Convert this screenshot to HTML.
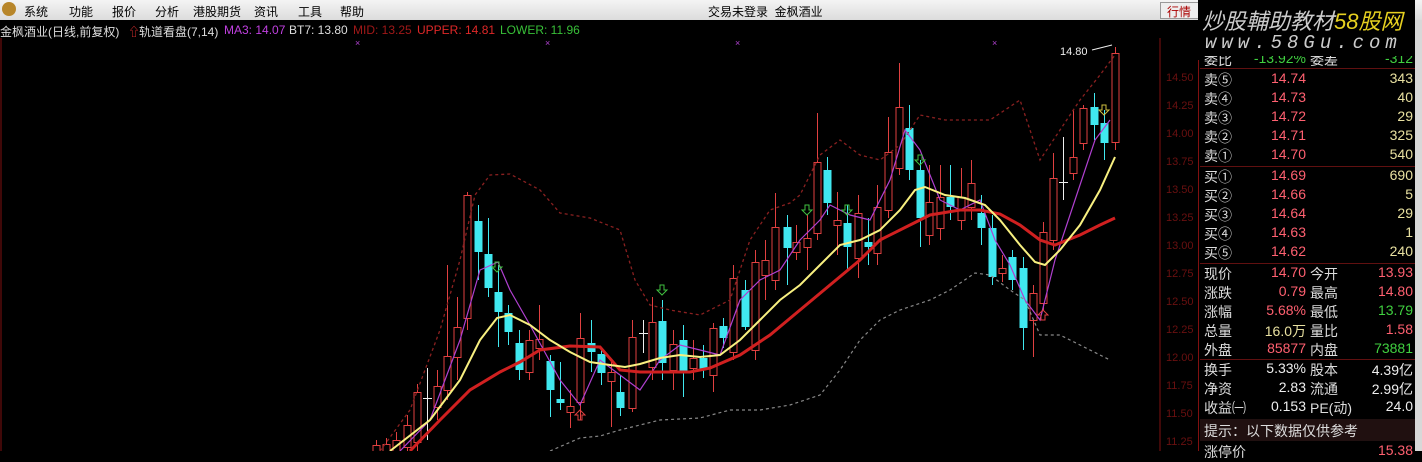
<!DOCTYPE html>
<html><head><meta charset="utf-8">
<style>
*{margin:0;padding:0;box-sizing:border-box}
body{width:1422px;height:451px;overflow:hidden;background:#000;font-family:"Liberation Sans","Noto Sans CJK SC",sans-serif;position:relative}
.menu{position:absolute;left:0;top:0;width:1422px;height:20px;background:linear-gradient(#f4f4f4,#dcdcdc);font-size:12px;color:#000}
.menu span{position:absolute;top:3px}
.info{position:absolute;left:0;top:21px;height:17px;font-size:12px;white-space:nowrap}
.info span{position:absolute;top:2px}
.rp{position:absolute;left:1200px;top:60px;width:215px;height:391px;font-size:14px}
.row{position:absolute;left:0;width:215px;height:19px}
.row b{font-weight:normal;position:absolute}
.l1{left:4px;color:#ddd}.p{right:109px;text-align:right;font-weight:bold}.l2{left:110px;color:#ddd}.v{right:2px;text-align:right;font-weight:bold}
.ax{position:absolute;left:1166px;font-size:11px;color:#6a1010}
</style></head><body>
<div class="menu">
<span style="left:2px;top:2px;width:14px;height:14px;border-radius:7px;background:#b8862a"></span>
<span style="left:24px">系统</span><span style="left:69px">功能</span><span style="left:112px">报价</span><span style="left:155px">分析</span><span style="left:193px">港股期货</span><span style="left:254px">资讯</span><span style="left:298px">工具</span><span style="left:340px">帮助</span>
<span style="left:708px">交易未登录 &nbsp;金枫酒业</span>
<span style="left:1160px;top:2px;width:40px;height:17px;border:1px solid #999;background:#eee;padding-left:6px;color:#a00">行情</span>
</div>
<div class="info">
<span style="left:0;color:#ddd">金枫酒业(日线,前复权)</span>
<span style="left:128px;color:#e33">⇧</span>
<span style="left:139px;color:#ddd">轨道看盘(7,14)</span>
<span style="left:224px;color:#c040e0">MA3: 14.07</span>
<span style="left:289px;color:#ddd">BT7: 13.80</span>
<span style="left:353px;color:#a01818">MID: 13.25</span>
<span style="left:417px;color:#e02828">UPPER: 14.81</span>
<span style="left:500px;color:#38c038">LOWER: 11.96</span>
</div>
<svg id="c" style="position:absolute;left:0;top:38px" width="1200" height="413" viewBox="0 38 1200 413"></svg>
<div class="ax" style="top:72px">14.50</div><div class="ax" style="top:100px">14.25</div><div class="ax" style="top:128px">14.00</div><div class="ax" style="top:156px">13.75</div><div class="ax" style="top:184px">13.50</div><div class="ax" style="top:212px">13.25</div><div class="ax" style="top:240px">13.00</div><div class="ax" style="top:268px">12.75</div><div class="ax" style="top:296px">12.50</div><div class="ax" style="top:324px">12.25</div><div class="ax" style="top:352px">12.00</div><div class="ax" style="top:380px">11.75</div><div class="ax" style="top:408px">11.50</div><div class="ax" style="top:436px">11.25</div>
<div style="position:absolute;left:1415px;top:20px;width:7px;height:431px;background:#d8d8d8"></div>
<div class="rp">
<div class="row" style="top:-10px"><b class="l1">委比</b><b class="p" style="color:#40d040">-13.92%</b><b class="l2">委差</b><b class="v" style="color:#40d040">-312</b></div>
<div style="position:absolute;left:0;top:8px;width:215px;height:1px;background:#601010"></div>
<div class="row" style="top:10px"><b class="l1">卖⑤</b><b class="p" style="color:#ff6070">14.74</b><b class="v" style="color:#e8e0a0">343</b></div>
<div class="row" style="top:29px"><b class="l1">卖④</b><b class="p" style="color:#ff6070">14.73</b><b class="v" style="color:#e8e0a0">40</b></div>
<div class="row" style="top:48px"><b class="l1">卖③</b><b class="p" style="color:#ff6070">14.72</b><b class="v" style="color:#e8e0a0">29</b></div>
<div class="row" style="top:67px"><b class="l1">卖②</b><b class="p" style="color:#ff6070">14.71</b><b class="v" style="color:#e8e0a0">325</b></div>
<div class="row" style="top:86px"><b class="l1">卖①</b><b class="p" style="color:#ff6070">14.70</b><b class="v" style="color:#e8e0a0">540</b></div>
<div style="position:absolute;left:0;top:106px;width:215px;height:1px;background:#601010"></div>
<div class="row" style="top:107px"><b class="l1">买①</b><b class="p" style="color:#ff6070">14.69</b><b class="v" style="color:#e8e0a0">690</b></div>
<div class="row" style="top:126px"><b class="l1">买②</b><b class="p" style="color:#ff6070">14.66</b><b class="v" style="color:#e8e0a0">5</b></div>
<div class="row" style="top:145px"><b class="l1">买③</b><b class="p" style="color:#ff6070">14.64</b><b class="v" style="color:#e8e0a0">29</b></div>
<div class="row" style="top:164px"><b class="l1">买④</b><b class="p" style="color:#ff6070">14.63</b><b class="v" style="color:#e8e0a0">1</b></div>
<div class="row" style="top:183px"><b class="l1">买⑤</b><b class="p" style="color:#ff6070">14.62</b><b class="v" style="color:#e8e0a0">240</b></div>
<div style="position:absolute;left:0;top:203px;width:215px;height:1px;background:#601010"></div>
<div class="row" style="top:204px"><b class="l1">现价</b><b class="p" style="color:#ff6070">14.70</b><b class="l2">今开</b><b class="v" style="color:#ff6070">13.93</b></div>
<div class="row" style="top:223px"><b class="l1">涨跌</b><b class="p" style="color:#ff6070">0.79</b><b class="l2">最高</b><b class="v" style="color:#ff6070">14.80</b></div>
<div class="row" style="top:242px"><b class="l1">涨幅</b><b class="p" style="color:#ff6070">5.68%</b><b class="l2">最低</b><b class="v" style="color:#40d040">13.79</b></div>
<div class="row" style="top:261px"><b class="l1">总量</b><b class="p" style="color:#e8e0a0">16.0万</b><b class="l2">量比</b><b class="v" style="color:#ff6070">1.58</b></div>
<div class="row" style="top:280px"><b class="l1">外盘</b><b class="p" style="color:#ff6070">85877</b><b class="l2">内盘</b><b class="v" style="color:#40d040">73881</b></div>
<div style="position:absolute;left:0;top:299px;width:215px;height:1px;background:#601010"></div>
<div class="row" style="top:300px"><b class="l1">换手</b><b class="p" style="color:#eee">5.33%</b><b class="l2">股本</b><b class="v" style="color:#eee">4.39亿</b></div>
<div class="row" style="top:319px"><b class="l1">净资</b><b class="p" style="color:#eee">2.83</b><b class="l2">流通</b><b class="v" style="color:#eee">2.99亿</b></div>
<div class="row" style="top:338px"><b class="l1">收益㈠</b><b class="p" style="color:#eee">0.153</b><b class="l2">PE(动)</b><b class="v" style="color:#eee">24.0</b></div>
<div style="position:absolute;left:0;top:359px;width:215px;height:22px;background:#201010"></div>
<div class="row" style="top:361px"><b class="l1">提示：以下数据仅供参考</b></div>
<div class="row" style="top:382px"><b class="l1">涨停价</b><b class="v" style="color:#ff6070">15.38</b></div>
</div>
<div style="position:absolute;left:1198px;top:0;width:217px;height:56px;background:#000"></div>
<div style="position:absolute;left:1202px;top:4px;font-size:22px;font-style:italic;color:#ccc;white-space:nowrap">炒股輔助教材<span style="color:#e6d020">58股网</span></div>
<div style="position:absolute;left:1205px;top:32px;font-size:19px;font-style:italic;color:#ccc;letter-spacing:5px;font-family:'Liberation Mono',monospace">www.58Gu.com</div>
<div style="position:absolute;left:1198px;top:60px;width:1px;height:391px;background:#801010"></div>
<script>
var s=document.getElementById('c'),h='';
h+='<line x1="1160" y1="38" x2="1160" y2="451" stroke="#801010"/>';
h+='<line x1="1" y1="38" x2="1" y2="451" stroke="#801010"/>';
var C=[[376,'u',445,451,440,451],[386,'u',444,451,438,451],[396,'u',440,451,432,451],[407,'u',425,447,415,451],[417,'u',392,442,384,451],[427,'x',398,398,368,440],[437,'u',386,407,370,420],[447,'u',356,390,265,400],[457,'u',327,357,297,380],[467,'u',195,318,192,330],[478,'d',221,252,205,280],[488,'d',254,288,218,297],[498,'d',292,312,265,347],[508,'d',313,332,305,345],[519,'d',343,370,330,380],[529,'u',340,372,330,380],[539,'u',339,348,305,360],[550,'d',361,390,355,417],[560,'d',399,403,362,410],[570,'u',406,412,390,428],[580,'u',338,402,313,420],[591,'d',343,352,320,372],[601,'d',354,373,348,385],[611,'u',372,381,360,427],[620,'d',392,408,375,416],[632,'u',337,408,320,412],[643,'x',333,333,320,353],[652,'u',322,367,297,380],[662,'d',321,363,300,380],[673,'u',344,370,330,390],[683,'d',340,372,325,397],[693,'u',358,368,340,380],[703,'d',358,370,345,378],[713,'u',328,375,323,392],[723,'d',326,338,318,348],[733,'u',278,352,265,360],[745,'d',290,327,280,330],[755,'u',262,350,250,360],[765,'u',260,275,240,300],[775,'u',227,280,193,290],[787,'d',227,248,215,285],[796,'u',242,252,225,260],[807,'u',238,247,215,270],[817,'u',162,233,113,240],[827,'d',170,203,157,215],[837,'u',220,225,192,255],[847,'d',223,247,205,270],[858,'u',213,258,195,278],[868,'d',242,247,218,265],[877,'u',207,253,185,265],[888,'u',152,210,117,218],[899,'u',107,168,63,175],[909,'d',128,170,105,180],[920,'d',170,218,160,247],[929,'u',202,235,165,245],[940,'u',197,228,165,240],[950,'d',197,207,165,220],[961,'u',197,220,168,230],[971,'u',183,207,160,220],[981,'d',213,228,195,245],[992,'d',228,277,215,285],[1002,'u',268,273,255,282],[1012,'d',257,280,250,290],[1023,'d',268,328,257,350],[1033,'u',293,320,285,357],[1043,'u',232,303,222,310],[1053,'u',178,240,153,250],[1063,'x',182,182,137,200],[1073,'u',157,173,110,180],[1083,'u',108,143,105,150],[1094,'d',107,125,93,140],[1104,'d',123,143,110,160],[1115,'u',53,142,47,150]];
C.forEach(function(c){var x=c[0],t=c[1];var col=t=='d'?'#40e8f0':(t=='x'?'#eee':'#e04040');
h+='<line x1="'+(x+.5)+'" y1="'+c[4]+'" x2="'+(x+.5)+'" y2="'+c[5]+'" stroke="'+col+'"/>';
if(t=='x')h+='<line x1="'+(x-4)+'" y1="'+c[2]+'.5" x2="'+(x+5)+'" y2="'+c[2]+'.5" stroke="#eee"/>';
else if(t=='d')h+='<rect x="'+(x-3.5)+'" y="'+c[2]+'" width="8" height="'+Math.max(2,c[3]-c[2])+'" fill="#40e8f0"/>';
else h+='<rect x="'+(x-3)+'" y="'+c[2]+'.5" width="7" height="'+Math.max(1,c[3]-c[2])+'" fill="#000" stroke="#e04040"/>';});
function pl(p,st,w,d){h+='<polyline fill="none" stroke="'+st+'" stroke-width="'+w+'" '+(d?'stroke-dasharray="'+d+'"':'')+' points="'+p+'"/>';}
pl('380,451 410,410 440,330 460,260 475,195 490,175 510,174 540,190 560,213 590,218 620,230 635,280 650,305 670,310 700,315 730,300 750,240 770,210 790,203 800,195 820,155 840,140 860,155 880,160 900,145 920,115 945,120 990,120 1020,100 1040,160 1060,130 1080,100 1100,75 1115,55','#8a2020',1.3,'3,3');
pl('550,451 580,438 600,436 620,430 640,425 660,420 700,418 730,410 760,410 790,405 820,395 840,370 860,340 880,320 900,310 930,300 950,290 975,273 990,275 1010,290 1025,300 1040,335 1060,335 1080,345 1110,360','#888',1.2,'3,3');
pl('400,451 430,420 460,340 480,270 498,262 510,290 530,325 560,380 580,405 600,360 620,375 640,390 660,360 680,345 700,350 720,355 740,300 760,280 780,270 800,240 820,220 830,205 850,215 870,220 890,180 905,130 920,150 940,200 960,210 980,200 995,240 1010,265 1025,300 1040,320 1055,260 1075,200 1095,140 1110,120','#b040d0',1.2);
pl('410,451 440,420 470,390 500,372 520,362 540,350 570,346 600,347 620,370 640,372 660,372 690,372 710,368 740,355 770,335 800,310 830,285 860,260 880,240 910,225 930,215 960,210 980,210 1000,214 1020,225 1040,240 1055,245 1080,235 1100,225 1115,218','#d02020',3);
pl('390,451 430,420 460,380 480,340 497,318 510,315 530,325 550,340 570,352 590,362 610,365 625,367 640,364 660,358 680,355 700,357 720,355 740,340 760,320 780,300 800,285 820,265 840,245 860,240 880,230 900,210 915,190 925,187 945,195 965,198 985,205 1000,220 1020,245 1035,262 1045,265 1060,250 1080,225 1100,190 1115,157','#f8f080',2);
[355,545,735,992].forEach(function(x){h+='<text x="'+x+'" y="46" fill="#b040d0" font-size="9">×</text>';});
h+='<text x="1060" y="55" fill="#eee" font-size="11" font-family="Liberation Sans">14.80</text><line x1="1092" y1="50" x2="1112" y2="45" stroke="#eee"/>';
[[497,262,'#40c040',1],[662,285,'#40c040',1],[807,205,'#40c040',1],[847,205,'#40c040',1],[920,155,'#40c040',1],[1104,105,'#d0c040',1],[580,410,'#e04040',0],[1043,310,'#e04040',0]].forEach(function(a){var x=a[0],y=a[1];
if(a[3])h+='<path d="M'+(x-2)+' '+y+'v5h-3l5,5 5,-5h-3v-5z" fill="none" stroke="'+a[2]+'"/>';
else h+='<path d="M'+(x-2)+' '+(y+10)+'v-5h-3l5,-5 5,5h-3v5z" fill="none" stroke="'+a[2]+'"/>';});
s.innerHTML=h;
</script>
</body></html>
